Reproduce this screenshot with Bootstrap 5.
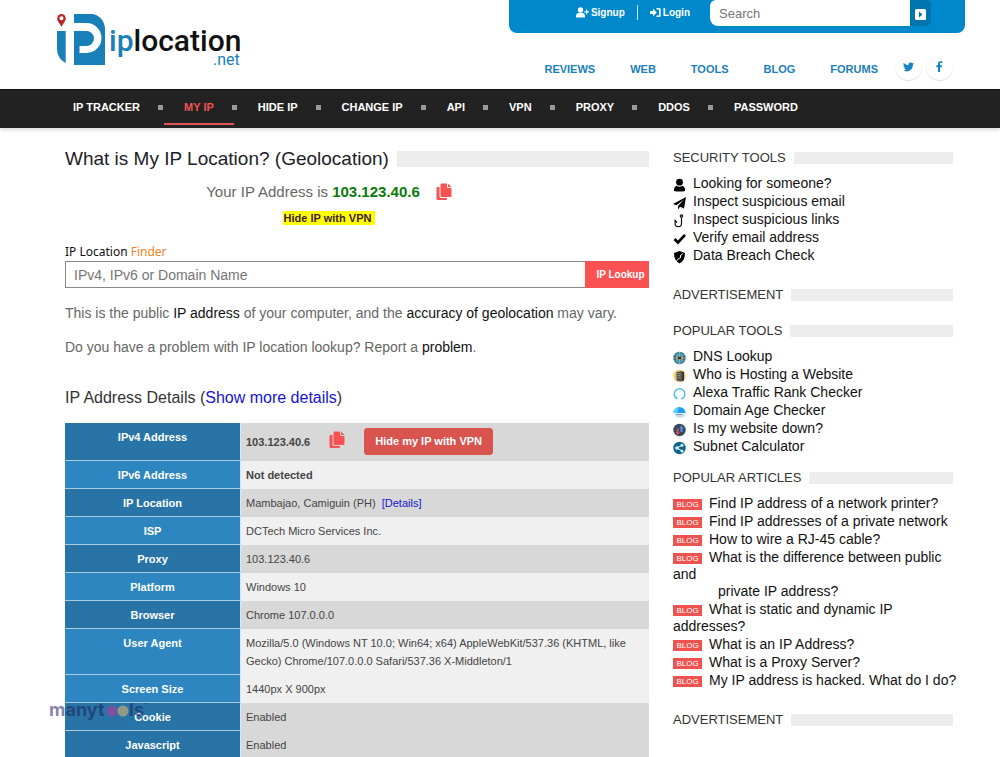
<!DOCTYPE html>
<html lang="en">
<head>
<meta charset="utf-8">
<meta name="viewport" content="width=device-width, initial-scale=1">
<title>What is My IP Location? (Geolocation)</title>
<link href="https://cdn.jsdelivr.net/npm/bootstrap@5.3.0/dist/css/bootstrap.min.css" rel="stylesheet">
<style>
body{font-family:"Liberation Sans",Arial,sans-serif;font-size:14px;line-height:18px;color:#666;overflow-x:hidden}
a{text-decoration:none;color:#111}
.site-head{padding:0 35px 0 57px;height:89px}
.logo-link{margin-top:12px}
.user-bar{background:#08c;border-radius:0 0 8px 8px;height:33px;padding-right:34px;width:456px}
.user-bar .auth{color:#fff;font-size:10px;font-weight:700;line-height:14px;gap:2px}
.auth-gap{margin:0 12px;width:1px;height:15px;background:#cde8f6}
.search-box{width:200px;height:26px;border:0;border-radius:6px 0 0 8px;font-size:13px;padding:0 9px;color:#555}
.search-btn{width:21px;height:26px;border:0;border-radius:0 5px 5px 0;background:#0074ad;padding:0}
.top-menu{margin:20px 12px 0 0}
.top-menu a{color:#1a7fba;font-size:11px;font-weight:700}
.top-menu .words{gap:35px;margin-right:17px;padding-top:7px}
.round-link{width:27px;height:27px;border-radius:50%;box-shadow:0 1px 1px rgba(0,0,0,.12)}
.main-nav{background:#222;border-top:1px solid #111;height:39px;padding-left:53px;box-shadow:0 2px 4px rgba(0,0,0,.14)}
.main-nav ul{gap:4px}
.main-nav a{display:block;color:#fff;font-size:11px;font-weight:700;padding:8px 20px 7px;border-bottom:2px solid transparent}
.main-nav li{position:relative}
.main-nav li:not(:last-child)::after{content:"";position:absolute;right:-3px;top:15px;width:5px;height:5px;background:#999}
.main-nav a.active{color:#f05454;border-color:#e05555}
.page-body{padding:19px 47px 0 65px}
.bar-title{display:flex;align-items:center;gap:8px;margin:0;font-weight:400}
.bar-title::after{content:"";flex:1;background:#ededed}
h1.bar-title{font-size:19px;line-height:24px;color:#1d2127}
h1.bar-title::after{height:16px}
h2.bar-title{font-size:13px;line-height:18px;color:#333;margin-top:18px}
h2.bar-title::after{height:12px}
.side-col h2.bar-title:first-child{margin-top:2px}
.ip-summary{margin-top:9px;padding-right:56px}
.ip-line{font-size:15px;line-height:24px}
.ip-line b{color:#0a7a0a}
.hl-link{background:#ff0;color:#402030;font-size:11px;font-weight:700;line-height:14px;padding:0 4px 0 1px;margin-top:7px}
.copy-btn{border:0;background:none;padding:0;line-height:0}
.finder-label{font-family:"Noto Sans",sans-serif;font-size:12px;line-height:18px;color:#111;margin-top:18px}
.finder-label span{color:#f58220}
.finder-in{height:27px;border:1px solid #888;border-right:0;padding:0 8px;color:#555;min-width:0}
.finder-btn{width:64px;height:27px;border:0;background:#fa5252;color:#fff;font-size:10px;font-weight:700;padding:0 0 0 7px}
.note{margin:16px 0 0}
::placeholder{color:#757575;opacity:1}
.details-title{font-size:16px;line-height:24px;color:#333;margin:30px 0 13px}
.details-title a,.ip-table a{color:#1414d2}
.ip-table{font-size:11px;line-height:18px;color:#444;border-collapse:separate;border-spacing:0}
.ip-table th{width:176px;background:#2e86c1;color:#fff;text-align:center;vertical-align:top;padding:5px 5px 4px;border-bottom:1px solid #a9cce3;border-right:1px solid #d6e6f2}
.ip-table td{background:#f0f0f0;padding:5px}
.ip-table .deep th{background:#2874a6}
.ip-table .deep td{background:#d8d8d8}
.ip-table tr:first-child td{padding-bottom:6px}
.addr-tools{gap:19px}
.vpn-btn{background:#d9534f;color:#fff;font-size:11px;font-weight:700;line-height:17px;border:1px solid #d9534f;border-radius:3px;padding:4px 10px}
.stamp{left:-16px;top:-3px;pointer-events:none}
.side-col{width:280px}
.side-list{margin:8px 0 0;line-height:17px;display:grid;gap:1px}
.side-list svg{width:14px;height:14px;margin-right:6px;vertical-align:-4px}
.side-list + h2.bar-title{margin-top:14px}
.side-list + h2.ad-title{margin-top:22px}
.blog-tag{display:inline-block;background:#ef5350;color:#fff;font-size:8px;line-height:11px;width:29px;text-align:center;margin-right:7px;vertical-align:1px}
.hang{margin-left:45px}
</style>
</head>
<body>
<svg class="d-none" aria-hidden="true">
<symbol id="copy" viewBox="0 0 16 18"><path fill="#fa5252" d="M1 4h2.500v9.500a1.500 1.500 0 0 0 1.500 1.500h6V16a1 1 0 0 1-1 1H1.500a1 1 0 0 1-1-1V5z"/><path fill="#fa5252" d="M5.500.500H11V4a1 1 0 0 0 1 1h3.500v8a1 1 0 0 1-1 1h-9a1 1 0 0 1-1-1V1.500a1 1 0 0 1 1-1zM12 .500l3.500 3.500H12z"/></symbol>
</svg>
<header class="site-head d-flex justify-content-between">
<a class="logo-link" href="#" aria-label="iplocation.net">
<svg width="186" height="56" viewBox="0 0 186 56">
<path fill="#b92530" fill-rule="evenodd" d="M4.500 2a4.300 4.300 0 0 1 4.300 4.300c0 3-2.800 5.200-4.300 8.700C3 11.500.200 9.300.200 6.300A4.300 4.300 0 0 1 4.500 2zm0 2.200a2 2 0 1 0 0 4 2 2 0 0 0 0-4z"/>
<path fill="#187fb8" d="M0 19h8.700v32C3 48 0 43 0 36z"/>
<path fill="#187fb8" fill-rule="evenodd" d="M17 2h17c8 0 14 7 14 15v36H17zm0 17h12.500a7.500 7.500 0 0 1 0 15H22.500v7h7a13.500 13.500 0 0 0 0-30H17z"/>
<g font-family="Roboto, sans-serif" fill="#187fb8"><text x="52" y="39" font-size="30" font-weight="500">ip<tspan fill="#111">location</tspan></text>
<text x="156" y="53" font-size="16">.net</text></g>
</svg></a>
<div>
<div class="user-bar d-flex justify-content-end">
<div class="d-flex align-items-center pb-2 me-3 pe-1">
<a class="auth d-flex align-items-center" href="#"><svg width="13" height="11" viewBox="0 0 13 11" fill="#fff"><circle cx="4.500" cy="3" r="2.700"/><path d="M0 10.500V9a3 3 0 0 1 3-3h3a3 3 0 0 1 3 3v1.500zM10 2.500h1.200v1.700H13v1.200h-1.800v1.800H10V5.400H8.300V4.200H10z"/></svg>Signup</a>
<span class="auth-gap"></span>
<a class="auth d-flex align-items-center" href="#"><svg width="11" height="9" viewBox="0 0 11 9" fill="#fff"><path d="M0 3h3V.800L6.800 4.500 3 8.200V6H0z"/><path d="M6.500 0h2.700A1.500 1.500 0 0 1 10.700 1.500v6A1.500 1.500 0 0 1 9.200 9H6.500V7.500H9v-6H6.500z"/></svg>Login</a>
</div>
<form class="d-flex" onsubmit="return false"><input class="search-box" type="search" placeholder="Search" aria-label="Search"><button class="search-btn" aria-label="Go"><svg width="11" height="11" viewBox="0 0 11 11"><rect width="11" height="11" rx="1.500" fill="#fff"/><path d="M4 2.500L7.500 5.500 4 8.500z" fill="#0074ad"/></svg></button></form>
</div>
<nav class="top-menu d-flex justify-content-end" aria-label="Sections">
<div class="words d-flex"><a href="#">REVIEWS</a><a href="#">WEB</a><a href="#">TOOLS</a><a href="#">BLOG</a><a href="#">FORUMS</a></div>
<a class="round-link d-flex align-items-center justify-content-center me-1" href="#" aria-label="Twitter"><svg width="11" height="10" viewBox="0 0 24 20"><path fill="#1583c4" d="M24 2.400c-.900.400-1.800.700-2.800.800 1-.600 1.800-1.600 2.200-2.700-1 .600-2 1-3.100 1.200A4.900 4.900 0 0 0 11.900 6.200C7.700 6 4.100 4 1.700.900c-1.300 2.200-.700 5.100 1.500 6.600-.800 0-1.600-.200-2.200-.600-.100 2.300 1.600 4.400 3.900 4.900-.700.200-1.500.200-2.200.100.600 2 2.400 3.400 4.600 3.400A9.900 9.900 0 0 1 0 17.300 14 14 0 0 0 21.500 4.900c1-.700 1.800-1.600 2.500-2.500z"/></svg></a>
<a class="round-link d-flex align-items-center justify-content-center" href="#" aria-label="Facebook"><svg width="7" height="11" viewBox="0 0 7 11"><path fill="#1583c4" d="M2 11V6.200H.400V4.300H2V3C2 1.200 3 .200 4.700.200l1.600.100V2H5.200C4.300 2 4 2.400 4 3v1.300h2.200L5.800 6.200H4V11z"/></svg></a>
</nav>
</div>
</header>
<nav class="main-nav" aria-label="Main"><ul class="list-unstyled d-flex m-0">
<li><a href="#">IP TRACKER</a></li><li><a class="active" href="#">MY IP</a></li><li><a href="#">HIDE IP</a></li><li><a href="#">CHANGE IP</a></li><li><a href="#">API</a></li><li><a href="#">VPN</a></li><li><a href="#">PROXY</a></li><li><a href="#">DDOS</a></li><li><a href="#">PASSWORD</a></li>
</ul></nav>
<div class="page-body d-flex gap-4">
<main class="flex-fill">
<h1 class="bar-title">What is My IP Location? (Geolocation)</h1>
<div class="ip-summary d-flex flex-column align-items-center">
<div class="ip-line d-flex align-items-center"><span>Your IP Address is <b>103.123.40.6</b></span><button class="copy-btn ms-3" aria-label="Copy address"><svg width="16" height="18"><use href="#copy"/></svg></button></div>
<a class="hl-link" href="#">Hide IP with VPN</a>
</div>
<form onsubmit="return false">
<label class="finder-label d-block" for="finder">IP Location <span>Finder</span></label>
<div class="d-flex"><input id="finder" class="finder-in flex-fill" type="text" placeholder="IPv4, IPv6 or Domain Name"><button class="finder-btn">IP Lookup</button></div>
</form>
<p class="note">This is the public <a href="#">IP address</a> of your computer, and the <a href="#">accuracy of geolocation</a> may vary.</p>
<p class="note">Do you have a problem with IP location lookup? Report a <a href="#">problem</a>.</p>
<h2 class="details-title">IP Address Details (<a href="#">Show more details</a>)</h2>
<table class="ip-table w-100">
<tr class="deep"><th scope="row">IPv4 Address</th><td><div class="addr-tools d-flex align-items-center"><b>103.123.40.6</b><button class="copy-btn pb-1" aria-label="Copy address"><svg width="16" height="18"><use href="#copy"/></svg></button><button class="vpn-btn">Hide my IP with VPN</button></div></td></tr>
<tr><th scope="row">IPv6 Address</th><td><b>Not detected</b></td></tr>
<tr class="deep"><th scope="row">IP Location</th><td>Mambajao, Camiguin (PH) &nbsp;<a href="#">[Details]</a></td></tr>
<tr><th scope="row">ISP</th><td>DCTech Micro Services Inc.</td></tr>
<tr class="deep"><th scope="row">Proxy</th><td>103.123.40.6</td></tr>
<tr><th scope="row">Platform</th><td>Windows 10</td></tr>
<tr class="deep"><th scope="row">Browser</th><td>Chrome 107.0.0.0</td></tr>
<tr><th scope="row">User Agent</th><td>Mozilla/5.0 (Windows NT 10.0; Win64; x64) AppleWebKit/537.36 (KHTML, like Gecko) Chrome/107.0.0.0 Safari/537.36 X-Middleton/1</td></tr>
<tr><th scope="row">Screen Size</th><td>1440px X 900px</td></tr>
<tr class="deep"><th scope="row" class="position-relative">Cookie
<svg class="stamp position-absolute" width="102" height="24" viewBox="0 0 102 24" opacity=".55" font-family="Inter, sans-serif" font-weight="700" font-size="18" fill="#1d1f5c"><text x="0" y="16">manyt</text><circle cx="63" cy="11" r="5.500" fill="#c2379b"/><circle cx="74" cy="11" r="5.500" fill="#e8b96a"/><text x="80" y="16">ls</text><text x="95" y="8" font-size="6">™</text></svg></th><td>Enabled</td></tr>
<tr class="deep"><th scope="row">Javascript</th><td>Enabled</td></tr>
</table>
</main>
<aside class="side-col flex-shrink-0 text-nowrap">
<h2 class="bar-title">SECURITY TOOLS</h2>
<ul class="side-list list-unstyled">
<li><a href="#"><svg viewBox="0 0 14 14"><circle cx="6.500" cy="4.200" r="3.400"/><path d="M1 13v-2a4 4 0 0 1 2.500-3.300c1.700 1.400 4.300 1.400 6 0A4 4 0 0 1 12 11v2q-5.500 1-11 0z"/></svg>Looking for someone?</a></li>
<li><a href="#"><svg viewBox="0 0 14 14"><path d="M13 1l-2 11.500-4-1.700L5 13.500V10L11 3.500 3.500 9.300 0 8z"/></svg>Inspect suspicious email</a></li>
<li><a href="#"><svg viewBox="0 0 14 14" fill="none" stroke="#111" stroke-width="1.200"><circle cx="8.500" cy="2" r="1.200"/><path d="M8.500 3.200v6.300a3.200 3.200 0 0 1-6.400 0V6.500l2 2"/></svg>Inspect suspicious links</a></li>
<li><a href="#"><svg viewBox="0 0 14 14"><path d="M.500 8L2.500 6l2.500 2.500 6-6.500 2 1.800L5 12.500z"/></svg>Verify email address</a></li>
<li><a href="#"><svg viewBox="0 0 14 14"><path d="M6.500 1L12 3c0 5-1.500 8.500-5.500 10.500C2.500 11.500 1 8 1 3z"/><path d="M10 3.500L7 6l1 1-4.500 3.500" fill="none" stroke="#fff"/></svg>Data Breach Check</a></li>
</ul>
<h2 class="bar-title ad-title">ADVERTISEMENT</h2>
<h2 class="bar-title">POPULAR TOOLS</h2>
<ul class="side-list list-unstyled">
<li><a href="#"><svg viewBox="0 0 14 14"><circle cx="6.500" cy="7" r="6.200" fill="#236b86"/><g fill="none" stroke="#8ecbd6" stroke-width=".700"><ellipse cx="6.500" cy="7" rx="2.700" ry="5.700"/><path d="M1.500 4h10M1.500 10h10M.500 7h12M6.500 1v12"/></g><path fill="#c39b5c" d="M3 5.500h7v3H3z"/><path fill="#234" d="M5 6h3v2H5z"/></svg>DNS Lookup</a></li>
<li><a href="#"><svg viewBox="0 0 14 14"><circle cx="6.500" cy="7" r="6.200" fill="#f2cc68"/><path fill="#555" d="M3.500 3l5-1v10.500l-5-1z"/><path fill="#333" d="M8.500 2L11 3v8.500l-2.500 1z"/><path stroke="#aaa" stroke-width=".600" d="M4.500 4.500h3M4.500 6.500h3M4.500 8.500h3"/></svg>Who is Hosting a Website</a></li>
<li><a href="#"><svg viewBox="0 0 14 14"><circle cx="6.500" cy="7" r="5.300" fill="#f5fbfe" stroke="#5cbbe4" stroke-width="1.500" stroke-dasharray="29 4.300" stroke-dashoffset="-10.500"/></svg>Alexa Traffic Rank Checker</a></li>
<li><a href="#"><svg viewBox="0 0 14 14"><path fill="#249cf0" d="M.500 8a6 6 0 0 1 12 0z"/><path fill="#53d0fb" d="M.500 7A6 6 0 0 1 6 2.100L4 8H.500z"/><path fill="#cfe0ef" d="M1 8.500h12c-1 3-3 4.500-6 4.500S2 11 1 8.500z"/><path stroke="#7890b0" d="M3 9.500h6"/></svg>Domain Age Checker</a></li>
<li><a href="#"><svg viewBox="0 0 14 14"><circle cx="6.500" cy="7" r="6.200" fill="#35475c"/><path fill="#e24a50" d="M3.700 5.500h2V9h1.200l-2.200 3-2.200-3h1.200z"/><path fill="#4d98da" d="M7.500 9V5.500H6.300l2.200-3 2.200 3H9.500V9z"/></svg>Is my website down?</a></li>
<li><a href="#"><svg viewBox="0 0 14 14"><circle cx="6.500" cy="7" r="6.200" fill="#08658f"/><path d="M9 4.200L4 7l5 3" fill="none" stroke="#fff"/><g fill="#d8f5ff"><circle cx="4" cy="7" r="1.800"/><circle cx="9" cy="4.200" r="1.500"/><circle cx="9" cy="10" r="1.500"/></g></svg>Subnet Calculator</a></li>
</ul>
<h2 class="bar-title">POPULAR ARTICLES</h2>
<ul class="side-list list-unstyled">
<li><a href="#"><span class="blog-tag">BLOG</span>Find IP address of a network printer?</a></li>
<li><a href="#"><span class="blog-tag">BLOG</span>Find IP addresses of a private network</a></li>
<li><a href="#"><span class="blog-tag">BLOG</span>How to wire a RJ-45 cable?</a></li>
<li class="text-wrap"><a href="#"><span class="blog-tag">BLOG</span>What is the difference between public and<br><span class="hang">private IP address?</span></a></li>
<li class="text-wrap"><a href="#"><span class="blog-tag">BLOG</span>What is static and dynamic IP addresses?</a></li>
<li><a href="#"><span class="blog-tag">BLOG</span>What is an IP Address?</a></li>
<li><a href="#"><span class="blog-tag">BLOG</span>What is a Proxy Server?</a></li>
<li><a href="#"><span class="blog-tag">BLOG</span>My IP address is hacked. What do I do?</a></li>
</ul>
<h2 class="bar-title ad-title">ADVERTISEMENT</h2>
</aside>
</div>
<script src="https://cdn.jsdelivr.net/npm/bootstrap@5.3.0/dist/js/bootstrap.bundle.min.js"></script>
</body>
</html>
